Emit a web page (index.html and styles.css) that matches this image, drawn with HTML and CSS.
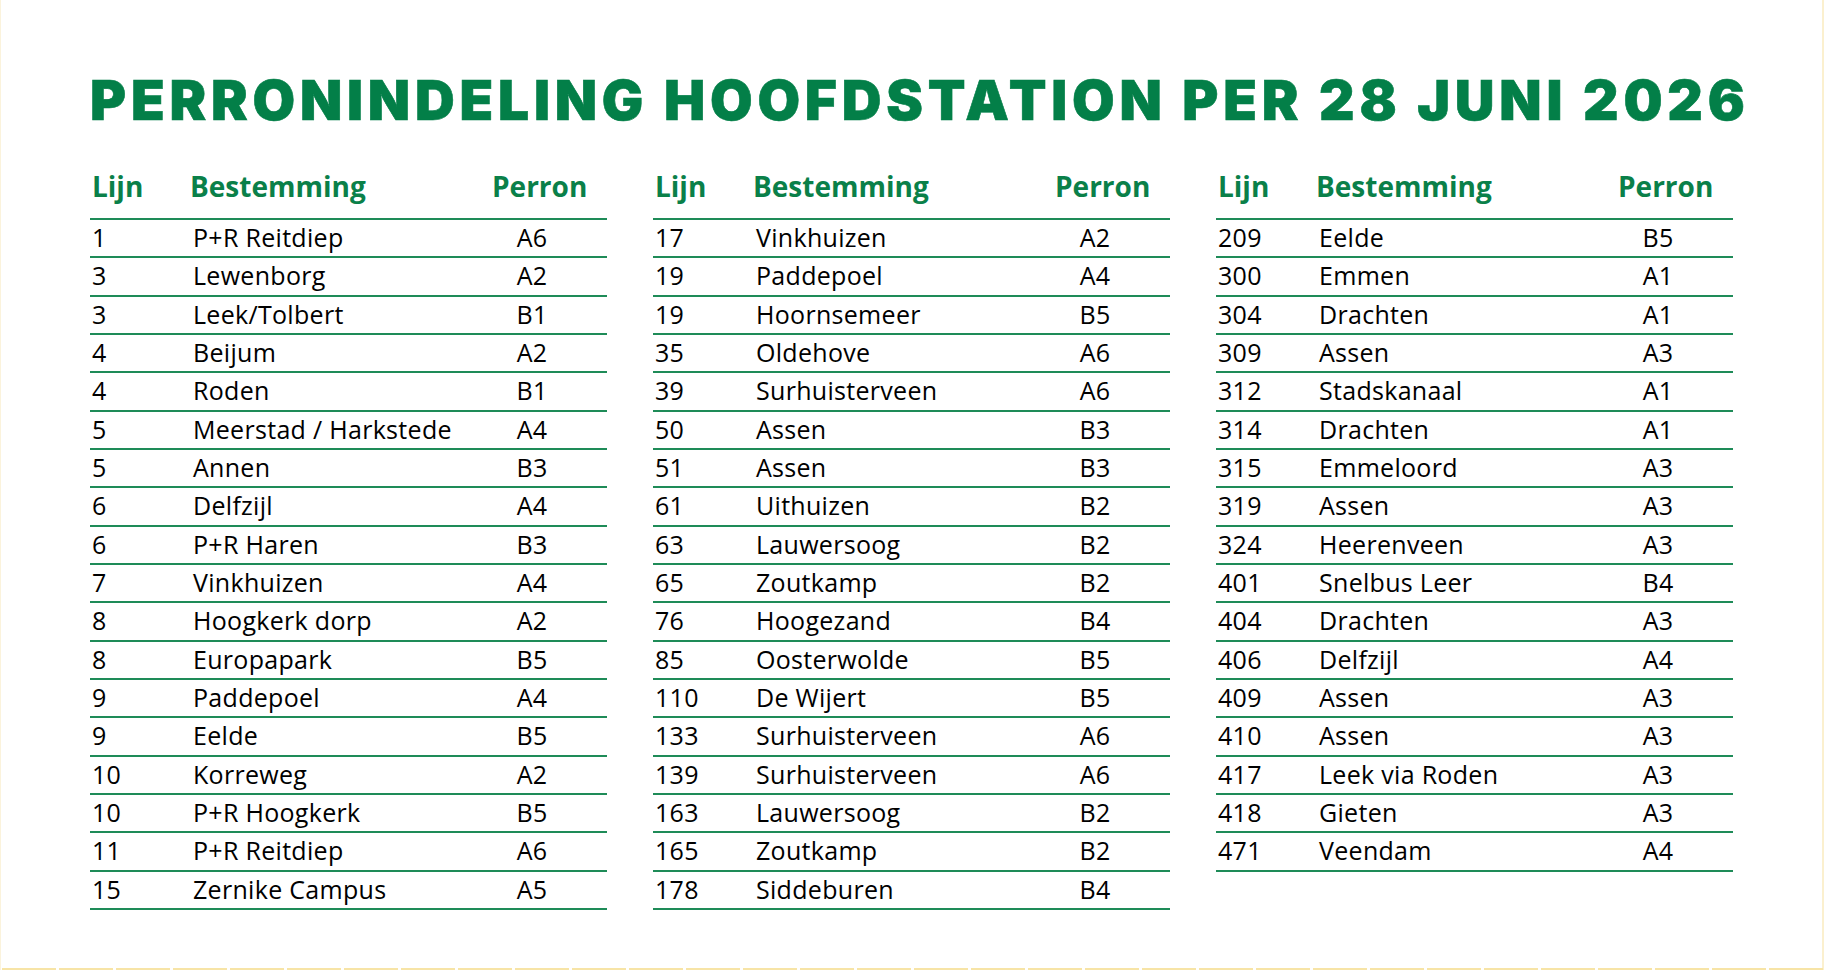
FILE: index.html
```html
<!DOCTYPE html>
<html lang="nl">
<head>
<meta charset="utf-8">
<title>Perronindeling Hoofdstation</title>
<link rel="stylesheet" href="styles.css">
</head>
<body>
<div class="page">
  <h1 class="title">PERRONINDELING HOOFDSTATION PER 28 JUNI 2026</h1>
  <div class="tables">
    <div class="col">
      <div class="row head"><span>Lijn</span><span>Bestemming</span><span>Perron</span></div>
      <div class="row"><span>1</span><span class="dest">P+R Reitdiep</span><span class="pr">A6</span></div>
      <div class="row"><span>3</span><span class="dest">Lewenborg</span><span class="pr">A2</span></div>
      <div class="row"><span>3</span><span class="dest">Leek/Tolbert</span><span class="pr">B1</span></div>
      <div class="row"><span>4</span><span class="dest">Beijum</span><span class="pr">A2</span></div>
      <div class="row"><span>4</span><span class="dest">Roden</span><span class="pr">B1</span></div>
      <div class="row"><span>5</span><span class="dest">Meerstad / Harkstede</span><span class="pr">A4</span></div>
      <div class="row"><span>5</span><span class="dest">Annen</span><span class="pr">B3</span></div>
      <div class="row"><span>6</span><span class="dest">Delfzijl</span><span class="pr">A4</span></div>
      <div class="row"><span>6</span><span class="dest">P+R Haren</span><span class="pr">B3</span></div>
      <div class="row"><span>7</span><span class="dest">Vinkhuizen</span><span class="pr">A4</span></div>
      <div class="row"><span>8</span><span class="dest">Hoogkerk dorp</span><span class="pr">A2</span></div>
      <div class="row"><span>8</span><span class="dest">Europapark</span><span class="pr">B5</span></div>
      <div class="row"><span>9</span><span class="dest">Paddepoel</span><span class="pr">A4</span></div>
      <div class="row"><span>9</span><span class="dest">Eelde</span><span class="pr">B5</span></div>
      <div class="row"><span>10</span><span class="dest">Korreweg</span><span class="pr">A2</span></div>
      <div class="row"><span>10</span><span class="dest">P+R Hoogkerk</span><span class="pr">B5</span></div>
      <div class="row"><span>11</span><span class="dest">P+R Reitdiep</span><span class="pr">A6</span></div>
      <div class="row"><span>15</span><span class="dest">Zernike Campus</span><span class="pr">A5</span></div>
    </div>
    <div class="col">
      <div class="row head"><span>Lijn</span><span>Bestemming</span><span>Perron</span></div>
      <div class="row"><span>17</span><span class="dest">Vinkhuizen</span><span class="pr">A2</span></div>
      <div class="row"><span>19</span><span class="dest">Paddepoel</span><span class="pr">A4</span></div>
      <div class="row"><span>19</span><span class="dest">Hoornsemeer</span><span class="pr">B5</span></div>
      <div class="row"><span>35</span><span class="dest">Oldehove</span><span class="pr">A6</span></div>
      <div class="row"><span>39</span><span class="dest">Surhuisterveen</span><span class="pr">A6</span></div>
      <div class="row"><span>50</span><span class="dest">Assen</span><span class="pr">B3</span></div>
      <div class="row"><span>51</span><span class="dest">Assen</span><span class="pr">B3</span></div>
      <div class="row"><span>61</span><span class="dest">Uithuizen</span><span class="pr">B2</span></div>
      <div class="row"><span>63</span><span class="dest">Lauwersoog</span><span class="pr">B2</span></div>
      <div class="row"><span>65</span><span class="dest">Zoutkamp</span><span class="pr">B2</span></div>
      <div class="row"><span>76</span><span class="dest">Hoogezand</span><span class="pr">B4</span></div>
      <div class="row"><span>85</span><span class="dest">Oosterwolde</span><span class="pr">B5</span></div>
      <div class="row"><span>110</span><span class="dest">De Wijert</span><span class="pr">B5</span></div>
      <div class="row"><span>133</span><span class="dest">Surhuisterveen</span><span class="pr">A6</span></div>
      <div class="row"><span>139</span><span class="dest">Surhuisterveen</span><span class="pr">A6</span></div>
      <div class="row"><span>163</span><span class="dest">Lauwersoog</span><span class="pr">B2</span></div>
      <div class="row"><span>165</span><span class="dest">Zoutkamp</span><span class="pr">B2</span></div>
      <div class="row"><span>178</span><span class="dest">Siddeburen</span><span class="pr">B4</span></div>
    </div>
    <div class="col">
      <div class="row head"><span>Lijn</span><span>Bestemming</span><span>Perron</span></div>
      <div class="row"><span>209</span><span class="dest">Eelde</span><span class="pr">B5</span></div>
      <div class="row"><span>300</span><span class="dest">Emmen</span><span class="pr">A1</span></div>
      <div class="row"><span>304</span><span class="dest">Drachten</span><span class="pr">A1</span></div>
      <div class="row"><span>309</span><span class="dest">Assen</span><span class="pr">A3</span></div>
      <div class="row"><span>312</span><span class="dest">Stadskanaal</span><span class="pr">A1</span></div>
      <div class="row"><span>314</span><span class="dest">Drachten</span><span class="pr">A1</span></div>
      <div class="row"><span>315</span><span class="dest">Emmeloord</span><span class="pr">A3</span></div>
      <div class="row"><span>319</span><span class="dest">Assen</span><span class="pr">A3</span></div>
      <div class="row"><span>324</span><span class="dest">Heerenveen</span><span class="pr">A3</span></div>
      <div class="row"><span>401</span><span class="dest">Snelbus Leer</span><span class="pr">B4</span></div>
      <div class="row"><span>404</span><span class="dest">Drachten</span><span class="pr">A3</span></div>
      <div class="row"><span>406</span><span class="dest">Delfzijl</span><span class="pr">A4</span></div>
      <div class="row"><span>409</span><span class="dest">Assen</span><span class="pr">A3</span></div>
      <div class="row"><span>410</span><span class="dest">Assen</span><span class="pr">A3</span></div>
      <div class="row"><span>417</span><span class="dest">Leek via Roden</span><span class="pr">A3</span></div>
      <div class="row"><span>418</span><span class="dest">Gieten</span><span class="pr">A3</span></div>
      <div class="row"><span>471</span><span class="dest">Veendam</span><span class="pr">A4</span></div>
    </div>
  </div>
</div>
</body>
</html>
```
FILE: styles.css
```css
html, body {
  margin: 0;
  padding: 0;
  background: #ffffff;
}

.page {
  box-sizing: border-box;
  width: 1824px;
  height: 970px;
  padding: 0 0 0 90px;
  overflow: hidden;
  background:
    repeating-linear-gradient(to right, #f7e4a6 0 54px, transparent 54px 57px) 2px 100% / 100% 2px no-repeat,
    linear-gradient(#fbf0cf, #fbf0cf) 100% 0 / 2px 100% no-repeat,
    linear-gradient(#fbf3dc, #fbf3dc) 0 0 / 1px 100% no-repeat,
    #ffffff;
}

.title {
  margin: 0;
  padding-top: 72px;
  height: 96px;
  box-sizing: border-box;
  font-family: Inter, "DejaVu Sans", sans-serif;
  font-weight: 900;
  font-size: 55px;
  line-height: 56px;
  letter-spacing: 4.8px;
  color: #037f48;
  white-space: nowrap;
  -webkit-text-stroke: 0.6px #037f48;
}

.tables {
  display: grid;
  grid-template-columns: 517px 517px 517px;
  column-gap: 46px;
  margin-top: 71px;
  align-items: start;
}

.row {
  display: grid;
  grid-template-columns: 100px 302px 115px;
  box-sizing: border-box;
  height: 38.33px;
  border-bottom: 2px solid #1e8b58;
  font-family: "Open Sans", "Noto Sans", sans-serif;
  font-weight: 500;
  font-size: 25px;
  line-height: 34px;
  letter-spacing: 0.3px;
  color: #000000;
  white-space: nowrap;
}

.row > span:first-child {
  padding-left: 2px;
}

.row .dest {
  padding-left: 3px;
}

.row .pr {
  width: 80px;
  text-align: center;
}

.row.head {
  height: auto;
  font-weight: 700;
  font-size: 28px;
  line-height: 38px;
  letter-spacing: 0;
  padding-bottom: 13px;
  color: #0a8049;
}

.row.head > span:nth-child(2) {
  padding-left: 0;
}
```
